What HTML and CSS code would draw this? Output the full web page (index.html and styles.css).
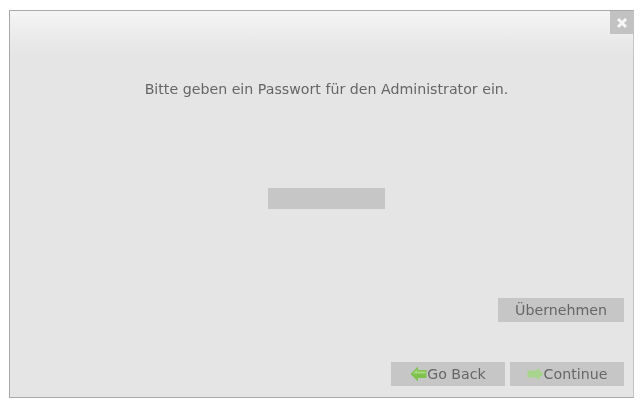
FILE: index.html
```html
<!DOCTYPE html>
<html lang="en">
<head>
    <meta charset="UTF-8">
    <meta name="viewport" content="width=device-width, initial-scale=1.0">
    <title>Passwort</title>
    <link rel="stylesheet" href="styles.css">
</head>
<body>
    <div class="window">
        <div class="title-bar">
            <button type="button" class="close-button" aria-label="Close">
                <svg width="12" height="12" viewBox="0 0 12 12"><path d="M2 2 L10 10 M10 2 L2 10" stroke="#f6f6f6" stroke-width="3" fill="none"/></svg>
            </button>
        </div>
        <div class="content">
            <p class="prompt">Bitte geben ein Passwort für den Administrator ein.</p>
            <input type="password" class="password-input">
            <div class="apply-row">
                <button type="button" class="action-button apply-button">Übernehmen</button>
            </div>
            <div class="nav-row">
                <button type="button" class="action-button nav-button">
                    <svg class="arrow" width="17" height="16" viewBox="0 0 17 16"><path d="M0.5 8 L8 0.5 V4 H16.5 V12 H8 V15.5 Z" fill="#7fc24e"/><path d="M3 7.5 L7 3.5 V5.5 H15.5 V7.5 Z" fill="#a8da82"/></svg>Go Back
                </button>
                <button type="button" class="action-button nav-button">
                    <svg class="arrow" width="17" height="16" viewBox="0 0 17 16"><path d="M16.5 8 L10 1.5 V4.5 H0.5 V11.5 H10 V14.5 Z" fill="#a9d48e"/></svg>Continue
                </button>
            </div>
        </div>
    </div>
</body>
</html>
```

FILE: styles.css
```css
html, body {
    height: 100%;
}
body {
    margin: 0;
    padding: 10px 9px 0 9px;
    box-sizing: border-box;
    background-color: #fff;
    font-family: "DejaVu Sans", sans-serif;
    color: #666;
}
.window {
    width: 625px;
    height: 388px;
    box-sizing: border-box;
    display: flex;
    flex-direction: column;
    background-color: #e5e5e5;
    border: 1px solid #a8a8a8;
    border-right-color: #c4c4c4;
    filter: blur(0.6px);
}
.title-bar {
    height: 23px;
    display: flex;
    justify-content: flex-end;
    background: linear-gradient(#f5f5f5, #ececec);
}
.close-button {
    width: 23px;
    height: 23px;
    padding: 0;
    border: none;
    background-color: #c2c2c2;
    display: flex;
    align-items: center;
    justify-content: center;
}
.content {
    flex: 1;
    display: flex;
    flex-direction: column;
    align-items: center;
    padding: 0 0 11px 0;
    background: linear-gradient(#ececec, #e5e5e5 20px);
}
.prompt {
    margin: 46px 0 0 10px;
    font-size: 14.2px;
    line-height: 18px;
}
.password-input {
    width: 117px;
    height: 21px;
    box-sizing: border-box;
    margin: 90px 0 0 10px;
    padding: 0;
    border: none;
    background-color: #c6c6c6;
}
.apply-row {
    align-self: flex-end;
    margin: 89px 9px 0 0;
}
.nav-row {
    align-self: flex-end;
    display: flex;
    gap: 5px;
    margin: auto 9px 0 0;
}
.action-button {
    height: 24px;
    padding: 0;
    border: none;
    background-color: #c6c6c6;
    color: #666;
    font-family: "DejaVu Sans", sans-serif;
    font-size: 14.2px;
    display: flex;
    align-items: center;
    justify-content: center;
}
.apply-button {
    width: 126px;
}
.nav-button {
    width: 114px;
}
.arrow {
    flex: none;
}
```
